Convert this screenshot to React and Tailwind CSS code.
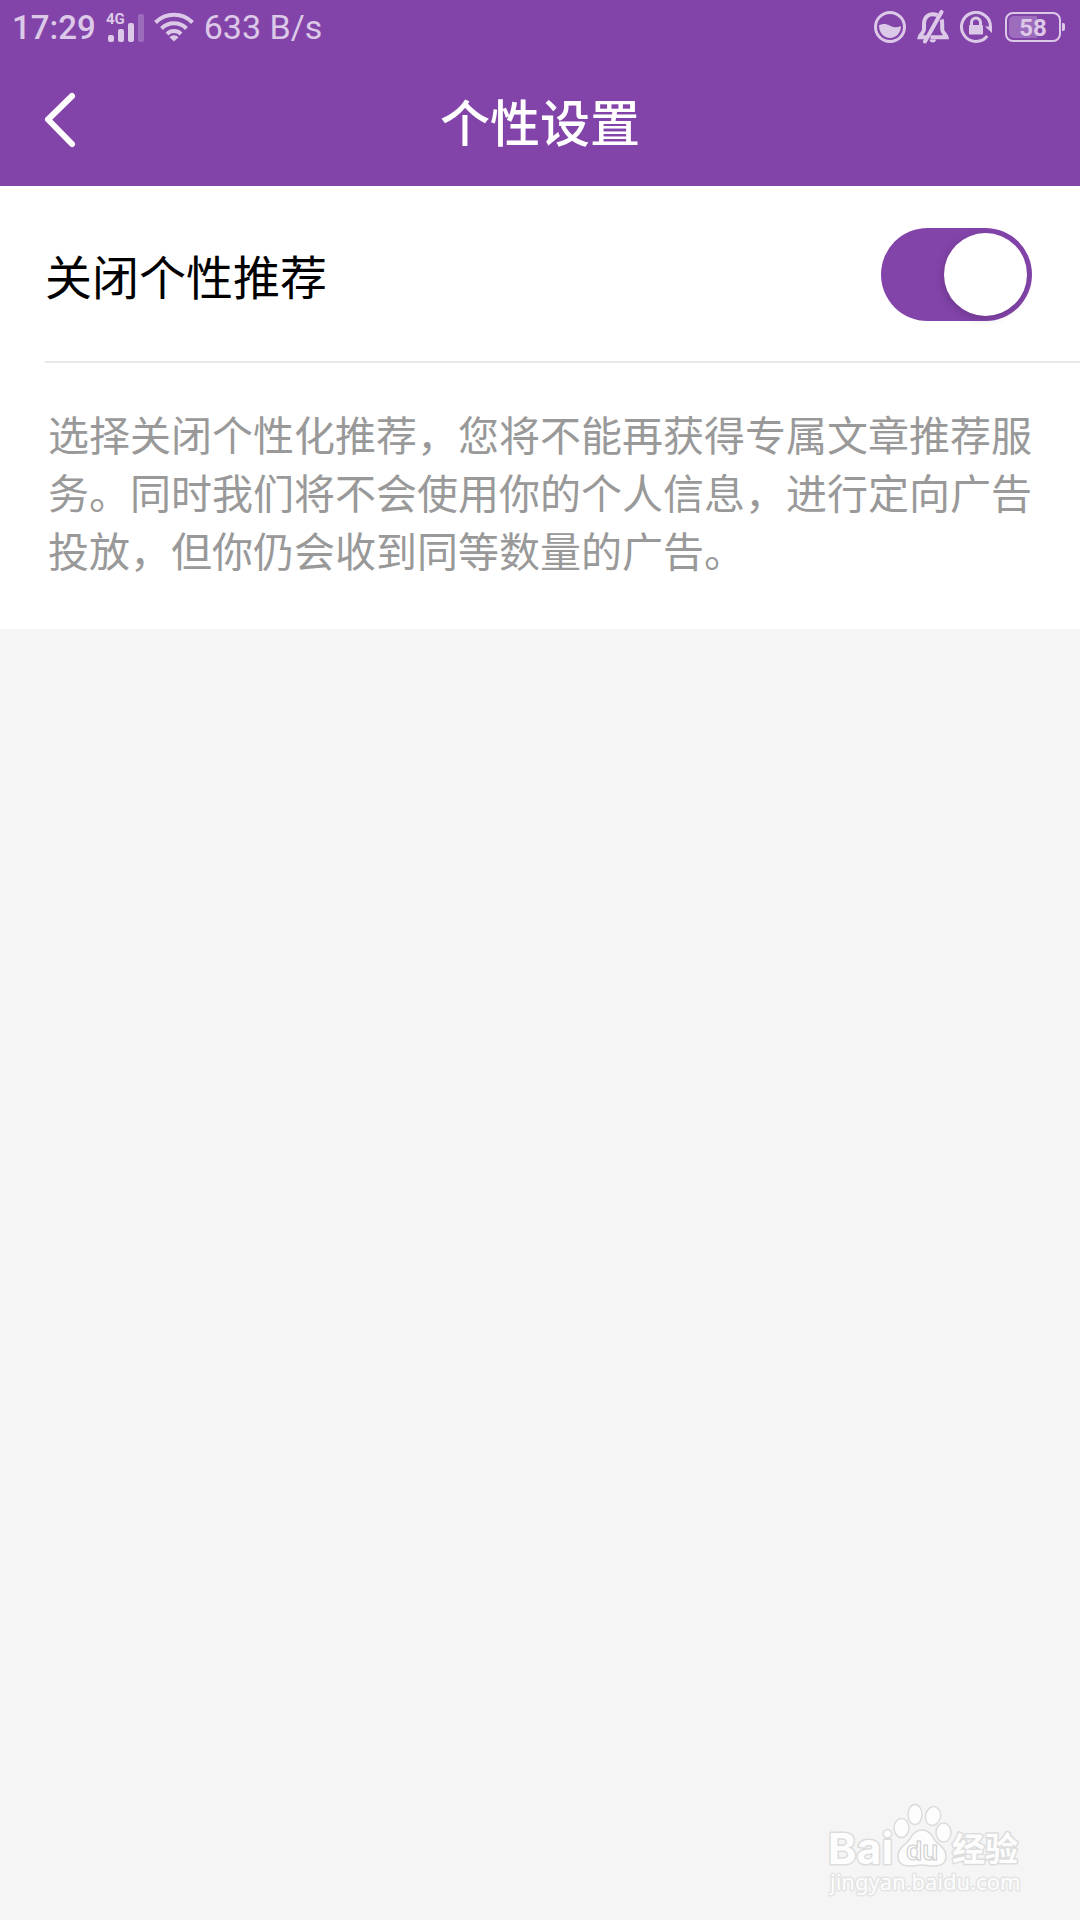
import React, { useState } from 'react';

const SignalIcon = () => (
  <svg width="40" height="32" viewBox="0 0 40 32" fill="currentColor" aria-hidden="true">
    <text x="0" y="13" className="font-['Roboto'] text-[15px] font-bold">4G</text>
    <rect x="2" y="24" width="6" height="7" rx="2" />
    <rect x="12" y="18" width="6" height="13" rx="2" />
    <rect x="22" y="12" width="6" height="19" rx="2" />
    <rect x="32" y="3" width="6" height="28" rx="2" opacity="0.3" />
  </svg>
);

const WifiIcon = () => (
  <svg width="40" height="32" viewBox="0 0 40 32" fill="none" stroke="currentColor" strokeWidth="4" aria-hidden="true">
    <path d="M1.5 11.5a26 26 0 0 1 37 0" />
    <path d="M7.5 17.5a17.6 17.6 0 0 1 25 0" />
    <path d="M13 23a9.9 9.9 0 0 1 14 0" />
    <path d="M15.5 26.2a6.4 6.4 0 0 1 9 0L20 30.5z" fill="currentColor" stroke="none" />
  </svg>
);

const DropIcon = () => (
  <svg width="32" height="32" viewBox="0 0 32 32" fill="none" aria-hidden="true">
    <circle cx="16" cy="16" r="14.5" stroke="currentColor" strokeWidth="3" />
    <path d="M5 14.5C8 12.5 12 12.4 15.5 14.5C19 16.5 23 17 27 15C27 22 22 27 16 27S5 22 5 14.5z" fill="currentColor" />
  </svg>
);

const BellOffIcon = () => (
  <svg width="32" height="34" viewBox="0 0 32 34" fill="none" stroke="currentColor" strokeWidth="4" aria-hidden="true">
    <path d="M20.5 5.2C12 2 7 7 7 14v5c0 4-3.5 5-4.3 8.2h7" />
    <path d="M24.6 9.5c.5 1.5.6 3 .6 4.5v5c0 4 3.5 5 4.3 8.2H13.5" />
    <path d="M24.5 2L8 31.5" strokeLinecap="round" />
    <path d="M12.5 29.5H19c0 1.8-1.3 3-3.2 3s-3.3-1.2-3.3-3z" fill="currentColor" stroke="none" />
  </svg>
);

const RotationLockIcon = () => (
  <svg width="32" height="32" viewBox="0 0 32 32" fill="none" stroke="currentColor" strokeWidth="3" aria-hidden="true">
    <path d="M27.3 25A14.5 14.5 0 1 1 30.5 16" />
    <path d="M25 15.5h7V22z" fill="currentColor" stroke="none" />
    <path d="M11.5 15v-3.5a4.5 4.5 0 0 1 9 0V15" />
    <rect x="9" y="14" width="14" height="9.5" rx="1" fill="currentColor" stroke="none" />
  </svg>
);

const BatteryIcon = ({ level }) => (
  <svg width="62" height="32" viewBox="0 0 62 32" role="img" aria-label={`${level}%`}>
    <rect x="1" y="2" width="54" height="28" rx="7" fill="none" stroke="currentColor" strokeWidth="2" />
    <path d="M9 5h23v22H9a5 5 0 0 1-5-5V10a5 5 0 0 1 5-5z" fill="currentColor" opacity="0.3" />
    <path d="M57 12h1a2 2 0 0 1 2 2v4a2 2 0 0 1-2 2h-1z" fill="currentColor" />
    <text x="28" y="25" textAnchor="middle" fill="currentColor" className="font-['Roboto'] text-[24px] font-bold">{level}</text>
  </svg>
);

const StatusBar = () => (
  <div className="flex h-[60px] items-start justify-between pl-3 pr-[13px] text-[#dcc9e7] font-['Roboto',sans-serif]">
    <div className="flex h-[54px] items-center">
      <span className="text-[33px] font-medium leading-none">17:29</span>
      <span className="ml-2.5"><SignalIcon /></span>
      <span className="ml-2"><WifiIcon /></span>
      <span className="ml-2.5 text-[34px] leading-none">633 B/s</span>
    </div>
    <div className="flex h-[54px] items-center gap-[13px]">
      <div className="flex items-center gap-[11px]">
        <DropIcon />
        <BellOffIcon />
        <RotationLockIcon />
      </div>
      <BatteryIcon level={58} />
    </div>
  </div>
);

const Watermark = () => (
  <svg width="200" height="100" viewBox="0 0 200 100" fill="#fdfdfd" stroke="#dcdcdc" strokeWidth="1.5" aria-label="Baidu 经验">
    <g className="font-['Inter','Noto_Sans_CJK_SC',sans-serif]" paintOrder="stroke" strokeWidth="3" strokeLinejoin="round">
      <text x="0" y="64" className="text-[43px] font-bold">Bai</text>
      <text x="124" y="61" className="text-[33px] font-bold">经验</text>
      <text x="2" y="90" className="font-['Noto_Sans'] text-[22px]" stroke="#e4e4e4">jingyan.baidu.com</text>
    </g>
    <ellipse cx="73.5" cy="28" rx="7.5" ry="9.5" />
    <ellipse cx="87" cy="14.5" rx="7" ry="10" />
    <ellipse cx="105" cy="16" rx="7.5" ry="9.5" transform="rotate(12 105 16)" />
    <ellipse cx="115.5" cy="32.5" rx="7.5" ry="9.5" />
    <path d="M94 30c6 0 9 3 12 9 3 5 12 8 12 17 0 7-5 10-12 10-5 0-8-1-12-1s-7 1-12 1c-7 0-12-3-12-10 0-9 9-12 12-17 3-6 6-9 12-9z" />
    <text x="94" y="60" textAnchor="middle" stroke="#cccccc" strokeWidth="1" className="font-['Inter'] text-[26px] font-semibold">du</text>
  </svg>
);

const App = () => {
  const [closed, setClosed] = useState(true);

  return (
    <div className="flex min-h-screen flex-col bg-[#f5f5f5] font-['Noto_Sans_CJK_SC',sans-serif]">
      <header className="bg-[#8344aa] text-white">
        <StatusBar />
        <div className="grid h-[126px] grid-cols-[1fr_auto_1fr] items-center px-10 pb-1.5">
          <button type="button" aria-label="返回" className="w-10">
            <svg width="40" height="60" viewBox="0 0 40 60" fill="none" stroke="currentColor" strokeWidth="6" strokeLinecap="round" strokeLinejoin="round">
              <path d="M32 6L8 29.5L32 54" />
            </svg>
          </button>
          <h1 className="text-[50px] font-medium leading-none">个性设置</h1>
        </div>
      </header>

      <main className="flex-1">
        <section className="bg-white">
          <label className="ml-[45px] flex h-[177px] items-center justify-between border-b-2 border-[#e8e8e8] pr-12 pt-0.5">
            <span className="text-[47px] leading-none text-black">关闭个性推荐</span>
            <span className="flex">
              <input
                type="checkbox"
                role="switch"
                className="peer sr-only"
                checked={closed}
                onChange={e => setClosed(e.target.checked)}
              />
              <span className="flex h-[93px] w-[151px] items-center rounded-full bg-gray-300 p-[5px] peer-checked:justify-end peer-checked:bg-[#8344aa]">
                <span className="size-[83px] rounded-full bg-white shadow-[-2px_3px_10px_rgba(0,0,0,0.16)]" />
              </span>
            </span>
          </label>
          <p className="px-12 pb-[51px] pt-[41px] text-[41px] leading-[58px] text-[#999999]">
            选择关闭个性化推荐，您将不能再获得专属文章推荐服务。同时我们将不会使用你的个人信息，进行定向广告投放，但你仍会收到同等数量的广告。
          </p>
        </section>
      </main>

      <footer className="flex justify-end pb-5 pr-[52px]">
        <Watermark />
      </footer>
    </div>
  );
};

export default App;
